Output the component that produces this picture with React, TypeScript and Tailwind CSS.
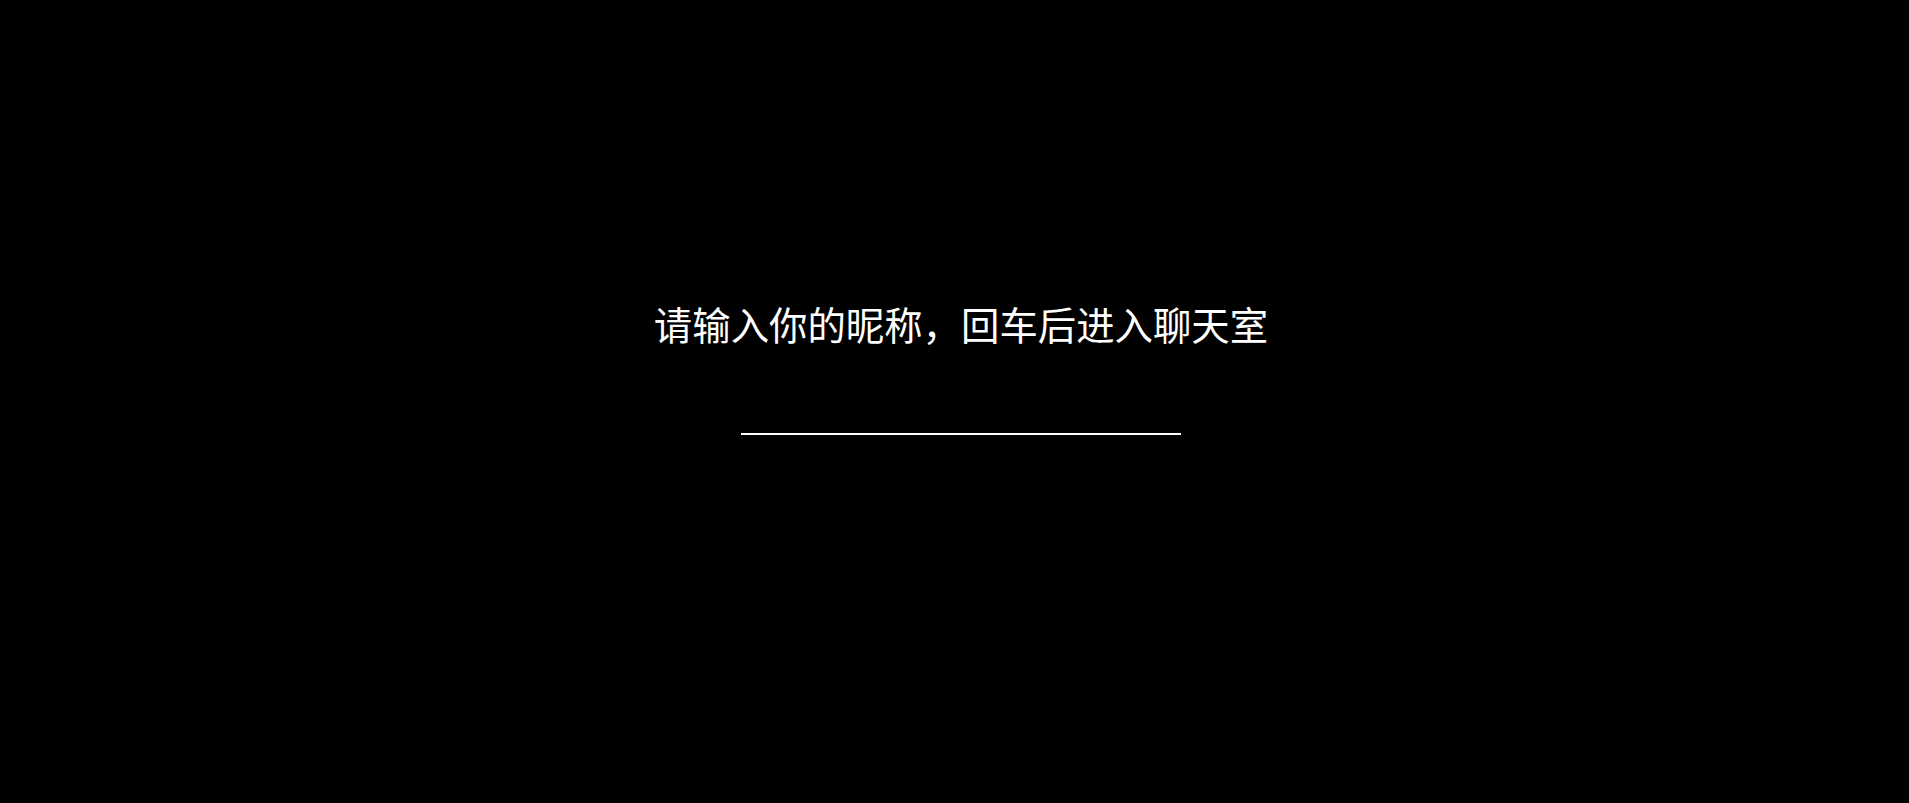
import { useState } from 'react'

export default function App() {
  const [nickname, setNickname] = useState('')

  return (
    <div
      className="flex h-screen w-full flex-col items-center overflow-hidden bg-black pl-[13px] pt-[295px] text-white"
      style={{ fontFamily: '"Noto Sans CJK SC", "Noto Sans", sans-serif' }}
    >
      <h1 className="text-[38.4px] font-normal leading-[56px]">请输入你的昵称，回车后进入聊天室</h1>
      <input
        type="text"
        value={nickname}
        onChange={(e: React.ChangeEvent<HTMLInputElement>) => setNickname(e.target.value)}
        className="mt-[42px] h-[42px] w-[440px] border-b-2 border-white bg-transparent text-center text-[24px] text-white outline-none"
      />
    </div>
  )
}
